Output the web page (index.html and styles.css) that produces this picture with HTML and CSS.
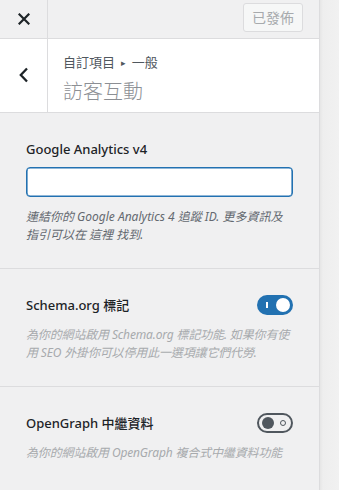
FILE: index.html
```html
<!DOCTYPE html>
<html lang="zh-Hant">
<head>
<meta charset="utf-8">
<title>訪客互動</title>
<link rel="stylesheet" href="styles.css">
</head>
<body>
<div class="page">
  <div class="panel">
    <header class="topbar">
      <button class="close-btn" aria-label="關閉">
        <svg width="12" height="12" viewBox="0 0 12 12"><path d="M1.5 1.5 L10.5 10.5 M10.5 1.5 L1.5 10.5" stroke="#1d2327" stroke-width="2.2" stroke-linecap="square" fill="none"/></svg>
      </button>
      <div class="topbar-actions">
        <button class="published" disabled>已發佈</button>
      </div>
    </header>
    <div class="section-head">
      <button class="back-btn" aria-label="返回">
        <svg width="10" height="16" viewBox="0 0 10 16"><path d="M8 1.5 L1.8 8 L8 14.5" stroke="#1d2327" stroke-width="2.3" fill="none"/></svg>
      </button>
      <div class="section-title">
        <div class="crumb">自訂項目 <span class="crumb-arrow">▸</span> 一般</div>
        <h3 class="title">訪客互動</h3>
      </div>
    </div>
    <div class="control">
      <label class="control-title">Google Analytics v4</label>
      <input class="text-input" type="text">
      <p class="desc">連結你的 Google Analytics 4 追蹤 ID. 更多資訊及指引可以在 這裡 找到.</p>
    </div>
    <div class="control">
      <div class="toggle-row">
        <span class="control-title">Schema.org 標記</span>
        <span class="toggle on"><span class="bar"></span><span class="knob"></span></span>
      </div>
      <p class="desc light">為你的網站啟用 Schema.org 標記功能. 如果你有使用 SEO 外掛你可以停用此一選項讓它們代勞.</p>
    </div>
    <div class="control last">
      <div class="toggle-row">
        <span class="control-title">OpenGraph 中繼資料</span>
        <span class="toggle off"><span class="knob"></span><span class="ring"></span></span>
      </div>
      <p class="desc light">為你的網站啟用 OpenGraph 複合式中繼資料功能</p>
    </div>
  </div>
  <div class="preview-edge"></div>
</div>
</body>
</html>
```
FILE: styles.css
```css
* { box-sizing: border-box; }
html, body { margin: 0; padding: 0; }
body {
  width: 339px;
  height: 490px;
  overflow: hidden;
  background: #f0f0f1;
  font-family: "Noto Sans", "Noto Sans CJK TC", sans-serif;
  color: #1d2327;
}
.page {
  display: flex;
  height: 490px;
}
.panel {
  width: 320px;
  flex: none;
  background: #f0f0f1;
  border-right: 1px solid #dcdcde;
  display: flex;
  flex-direction: column;
}
.preview-edge {
  flex: 1;
  background: linear-gradient(to right, #e6e6e6 0, #eeeeee 3px, #f1f1f1 100%);
}
.topbar {
  height: 39px;
  display: flex;
  align-items: stretch;
  border-bottom: 1px solid #dcdcde;
  background: #f0f0f1;
}
.close-btn {
  width: 48px;
  border: 0;
  border-right: 1px solid #dcdcde;
  background: transparent;
  padding: 0;
  display: flex;
  align-items: center;
  justify-content: center;
  padding-bottom: 1px;
}
.topbar-actions {
  flex: 1;
  display: flex;
  justify-content: flex-end;
  align-items: flex-start;
  padding: 3px 16px 0 0;
}
.published {
  width: 60px;
  height: 29px;
  border: 1px solid #dcdcde;
  border-radius: 3px;
  background: #f6f7f7;
  color: #a7aaad;
  font-family: "Noto Sans CJK TC", sans-serif;
  font-size: 14px;
  padding: 0;
  line-height: 27px;
}
.section-head {
  display: flex;
  background: #ffffff;
  border-bottom: 1px solid #dcdcde;
  height: 74px;
}
.back-btn {
  width: 48px;
  border: 0;
  border-right: 1px solid #dcdcde;
  background: transparent;
  padding: 0 0 0 1px;
  display: flex;
  align-items: center;
  justify-content: center;
  padding-bottom: 2px;
}
.section-title {
  padding: 14px 0 0 15px;
}
.crumb {
  font-size: 13px;
  line-height: 18px;
  color: #50575e;
  font-family: "Noto Sans CJK TC", sans-serif;
}
.crumb-arrow {
  font-size: 9px;
  color: #50575e;
  margin: 0 3px;
  position: relative;
  top: -1px;
}
.title {
  margin: 5px 0 0;
  font-size: 20px;
  line-height: 26px;
  font-weight: 300;
  color: #8c8f94;
  font-family: "Noto Sans CJK TC", sans-serif;
}
.control {
  padding: 26px 26px 24px;
  border-bottom: 1px solid #dcdcde;
}
.control.last { border-bottom: 0; }
.control-title {
  display: block;
  font-size: 13px;
  line-height: 20px;
  font-weight: 500;
  color: #1d2327;
}
.text-input {
  display: block;
  margin-top: 8px;
  width: 267px;
  height: 30px;
  border: 1px solid #2271b1;
  box-shadow: inset 0 0 0 0.6px #2271b1;
  border-radius: 4px;
  background: #fff;
  outline: none;
}
.desc {
  margin: 11px 0 0;
  font-size: 12px;
  line-height: 18px;
  font-style: italic;
  color: #646970;
}
.desc.light {
  color: #a7aaad;
  letter-spacing: -0.15px;
}
.toggle-row {
  display: flex;
  align-items: center;
  justify-content: space-between;
  height: 20px;
}
.toggle {
  position: relative;
  width: 36px;
  height: 20px;
  border-radius: 10px;
  flex: none;
}
.toggle.on { background: #2271b1; }
.toggle.on .bar {
  position: absolute;
  left: 9px;
  top: 7px;
  width: 2px;
  height: 6px;
  background: #fff;
}
.toggle.on .knob {
  position: absolute;
  right: 3px;
  top: 3px;
  width: 14px;
  height: 14px;
  border-radius: 50%;
  background: #fff;
}
.toggle.off {
  border: 2px solid #50575e;
  height: 20px;
}
.toggle.off .knob {
  position: absolute;
  left: 3px;
  top: 2px;
  width: 12px;
  height: 12px;
  border-radius: 50%;
  background: #50575e;
}
.toggle.off .ring {
  position: absolute;
  right: 5px;
  top: 5px;
  width: 6px;
  height: 6px;
  border-radius: 50%;
  border: 1.5px solid #50575e;
}
```
